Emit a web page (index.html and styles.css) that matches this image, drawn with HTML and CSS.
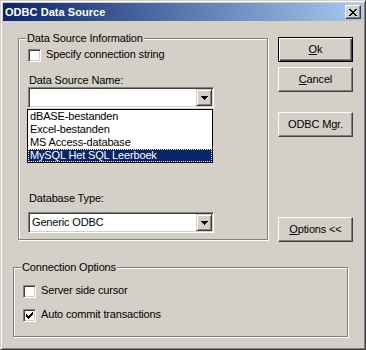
FILE: index.html
```html
<!DOCTYPE html>
<html>
<head>
<meta charset="utf-8">
<link rel="stylesheet" href="styles.css">
</head>
<body>
<div class="window">
  <div class="titlebar">
    <span class="title">ODBC Data Source</span>
    <span class="close-btn">
      <svg width="8" height="7" viewBox="0 0 8 7" shape-rendering="crispEdges">
        <path fill="#000" d="M0 0h2v1H0zM6 0h2v1H6zM1 1h2v1H1zM5 1h2v1H5zM2 2h4v1H2zM3 3h2v1H3zM2 4h4v1H2zM1 5h2v1H1zM5 5h2v1H5zM0 6h2v1H0zM6 6h2v1H6z"/>
      </svg>
    </span>
  </div>
  <div class="client">
    <div class="top">
      <div class="group group-dsi">
        <div class="group-title">Data Source Information</div>
        <div class="check-row row-spec">
          <span class="checkbox"></span>
          <span class="check-label">Specify connection string</span>
        </div>
        <div class="field-label label-dsn">Data Source Name:</div>
        <div class="combo">
          <div class="combo-value"></div>
          <div class="combo-btn">
            <svg width="7" height="4" viewBox="0 0 7 4" shape-rendering="crispEdges"><path fill="#000" d="M0 0h7v1H0zM1 1h5v1H1zM2 2h3v1H2zM3 3h1v1H3z"/></svg>
          </div>
          <ul class="dropdown">
            <li class="item">dBASE-bestanden</li>
            <li class="item">Excel-bestanden</li>
            <li class="item">MS Access-database</li>
            <li class="item selected">MySQL Het SQL Leerboek</li>
          </ul>
        </div>
        <div class="field-label label-type">Database Type:</div>
        <div class="combo combo-type">
          <div class="combo-value">Generic ODBC</div>
          <div class="combo-btn">
            <svg width="7" height="4" viewBox="0 0 7 4" shape-rendering="crispEdges"><path fill="#000" d="M0 0h7v1H0zM1 1h5v1H1zM2 2h3v1H2zM3 3h1v1H3z"/></svg>
          </div>
        </div>
      </div>
      <div class="buttons">
        <div class="btn btn-default"><u>O</u>k</div>
        <div class="btn"><u>C</u>ancel</div>
        <div class="btn btn-odbc">ODBC Mgr.</div>
        <div class="btn btn-options"><u>O</u>ptions &lt;&lt;</div>
      </div>
    </div>
    <div class="group group-conn">
      <div class="group-title">Connection Options</div>
      <div class="check-row row-server">
        <span class="checkbox"></span>
        <span class="check-label">Server side cursor</span>
      </div>
      <div class="check-row row-auto">
        <span class="checkbox checked">
          <svg width="7" height="7" viewBox="0 0 7 7" shape-rendering="crispEdges"><path fill="#000" d="M0 2h1v3H0zM1 3h1v3H1zM2 4h1v3H2zM3 3h1v3H3zM4 2h1v3H4zM5 1h1v3H5zM6 0h1v3H6z"/></svg>
        </span>
        <span class="check-label">Auto commit transactions</span>
      </div>
    </div>
  </div>
</div>
</body>
</html>
```

FILE: styles.css
```css
html, body {
  margin: 0;
  padding: 0;
  background: #d4d0c8;
}

body {
  font-family: "Liberation Sans", Arial, sans-serif;
  font-size: 11px;
  line-height: 13px;
  letter-spacing: -0.15px;
  color: #000;
}

.window {
  width: 366px;
  height: 350px;
  box-sizing: border-box;
  background: #d4d0c8;
  border: 1px solid;
  border-color: #d4d0c8 #404040 #404040 #d4d0c8;
  box-shadow: inset 1px 1px 0 #fff, inset -1px -1px 0 #808080;
  padding: 2px;
}

.titlebar {
  height: 18px;
  margin-bottom: 1px;
  background: linear-gradient(90deg, #0a246a 0%, #a6caf0 100%);
  display: flex;
  align-items: flex-start;
  justify-content: space-between;
}

.title {
  color: #fff;
  font-weight: bold;
  font-size: 11px;
  line-height: 18px;
  padding-left: 2px;
  letter-spacing: 0.05px;
}

.close-btn {
  width: 16px;
  height: 14px;
  box-sizing: border-box;
  margin: 2px 2px 0 0;
  background: #d4d0c8;
  border: 1px solid;
  border-color: #fff #404040 #404040 #fff;
  box-shadow: inset -1px -1px 0 #808080;
  display: flex;
  align-items: flex-start;
  justify-content: flex-start;
}

.close-btn svg {
  display: block;
  margin: 3px 0 0 3px;
}

.top {
  display: flex;
  align-items: flex-start;
}

.group {
  box-sizing: border-box;
  border: 1px solid #808080;
  box-shadow: inset 1px 1px 0 #fff, 1px 1px 0 #fff;
}

.group-title {
  width: fit-content;
  margin: -7px 0 0 7px;
  padding: 0 1px;
  background: #d4d0c8;
  line-height: 13px;
  position: relative;
}

.group-dsi {
  width: 250px;
  height: 202px;
  margin: 16px 0 0 15px;
}

.group-conn {
  width: 335px;
  height: 70px;
  margin: 25px 0 0 10px;
}

.check-row {
  display: flex;
  align-items: flex-start;
  height: 13px;
  margin-left: 9px;
}

.row-spec { margin-top: 4px; }
.row-server { margin-top: 11px; }
.row-auto { margin-top: 11px; }

.checkbox {
  width: 13px;
  height: 13px;
  box-sizing: border-box;
  background: #fff;
  border: 1px solid;
  border-color: #808080 #fff #fff #808080;
  box-shadow: inset 1px 1px 0 #404040, inset -1px -1px 0 #d4d0c8;
  flex: none;
}

.checkbox svg {
  display: block;
  margin: 2px 0 0 2px;
}

.check-label {
  margin: -1px 0 0 5px;
  white-space: nowrap;
}

.field-label {
  margin-left: 10px;
  white-space: nowrap;
}

.label-dsn { margin-top: 12px; }
.label-type { margin-top: 84px; }

.combo {
  position: relative;
  width: 186px;
  height: 21px;
  box-sizing: border-box;
  margin-left: 9px;
  background: #fff;
  border: 1px solid;
  border-color: #808080 #fff #fff #808080;
  box-shadow: inset 1px 1px 0 #404040, inset -1px -1px 0 #d4d0c8;
  padding: 1px;
  display: flex;
}

.combo-type { margin-top: 7px; }

.combo-value {
  flex: 1;
  padding-left: 2px;
  line-height: 17px;
  white-space: nowrap;
}

.combo-btn {
  width: 16px;
  height: 17px;
  box-sizing: border-box;
  background: #d4d0c8;
  border: 1px solid;
  border-color: #d4d0c8 #404040 #404040 #d4d0c8;
  box-shadow: inset 1px 1px 0 #fff, inset -1px -1px 0 #808080;
  display: flex;
  align-items: center;
  justify-content: center;
}

.combo-btn svg {
  display: block;
}

.dropdown {
  position: absolute;
  top: calc(100% + 2px);
  left: -2px;
  width: 186px;
  box-sizing: border-box;
  margin: 0;
  padding: 0;
  list-style: none;
  background: #fff;
  border: 1px solid #000;
  z-index: 2;
}

.item {
  height: 13px;
  line-height: 13px;
  padding-left: 2px;
  white-space: nowrap;
}

.item.selected {
  background: #0a246a;
  color: #fff;
  outline: 1px dotted #fff;
  outline-offset: -1px;
}

.buttons {
  display: flex;
  flex-direction: column;
  margin: 15px 0 0 10px;
}

.btn {
  width: 75px;
  height: 25px;
  box-sizing: border-box;
  border: 1px solid;
  border-color: #fff #404040 #404040 #fff;
  box-shadow: inset -1px -1px 0 #808080;
  text-align: center;
  line-height: 23px;
  white-space: nowrap;
}

.btn + .btn { margin-top: 5px; }

.btn-default {
  border-color: #000;
  box-shadow: inset 1px 1px 0 #fff, inset -1px -1px 0 #404040, inset -2px -2px 0 #808080;
}

.btn.btn-odbc { margin-top: 20px; }
.btn.btn-options { margin-top: 80px; }

u {
  text-decoration: underline;
  text-underline-offset: 1px;
}
```
